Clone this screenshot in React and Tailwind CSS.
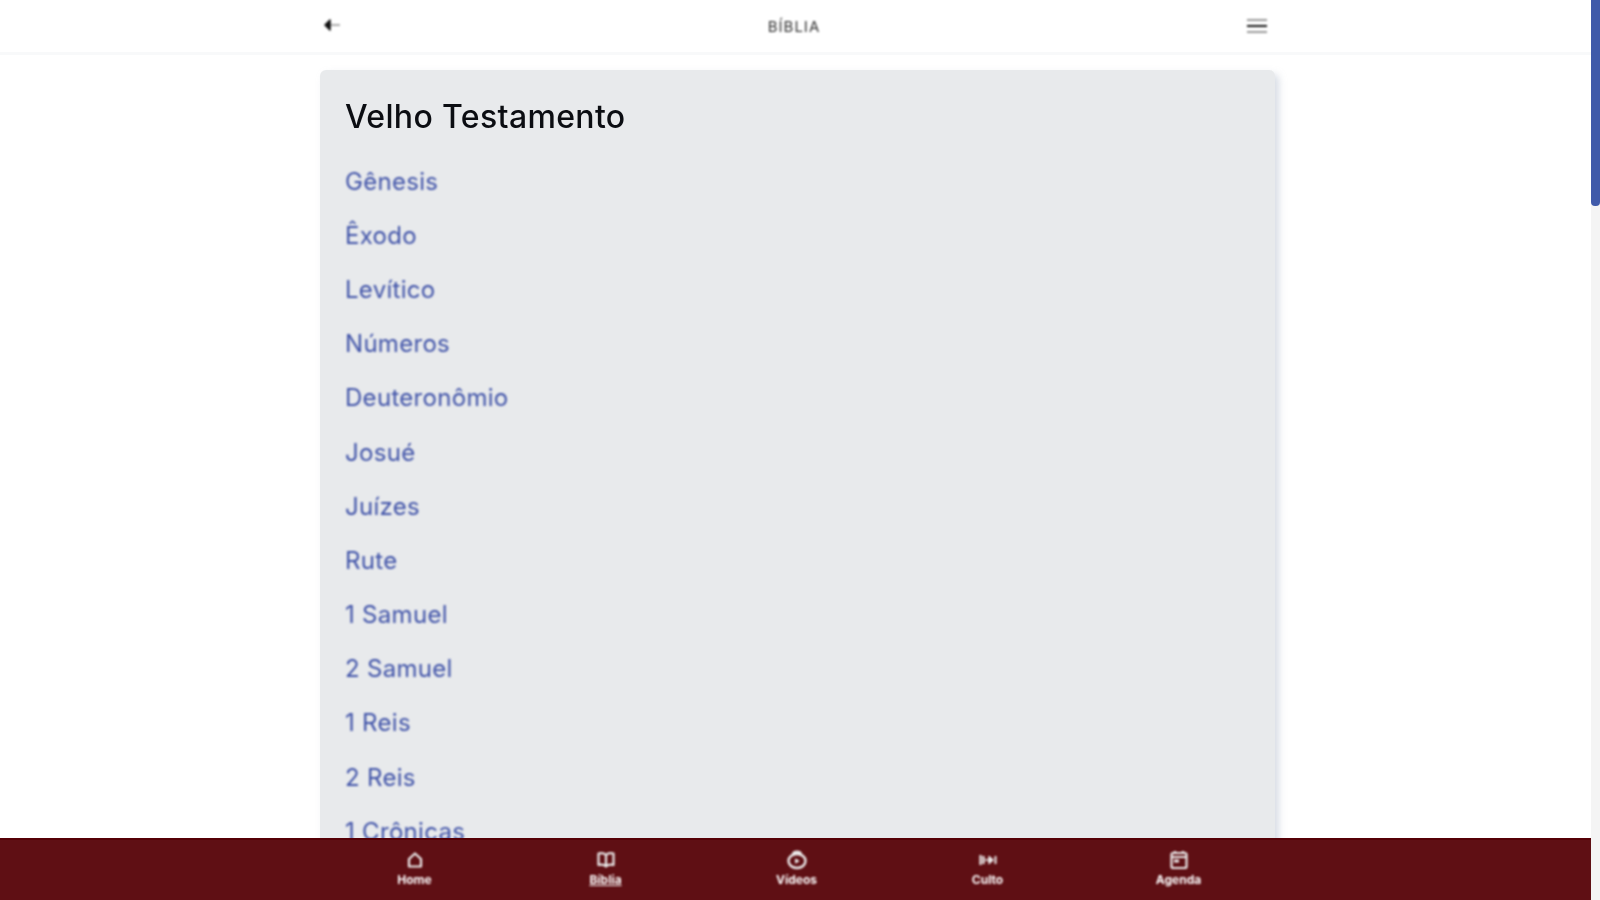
import React from 'react';

const books = [
    'Gênesis', 'Êxodo', 'Levítico', 'Números', 'Deuteronômio', 'Josué', 'Juízes',
    'Rute', '1 Samuel', '2 Samuel', '1 Reis', '2 Reis', '1 Crônicas', '2 Crônicas',
];

const HomeIcon = () => (
    <svg width="18" height="18" viewBox="0 0 18 18" fill="none" stroke="currentColor" strokeWidth="2.2" strokeLinejoin="round">
        <path d="M3 8 L9 2.5 L15 8 V15.5 H3 Z" />
    </svg>
);

const BookIcon = () => (
    <svg width="20" height="18" viewBox="0 0 20 18" fill="none" stroke="currentColor" strokeWidth="2.2" strokeLinejoin="round">
        <path d="M10 4 C8 2 5 2 2.5 2.5 V14 C5 13.5 8 13.5 10 15.5 C12 13.5 15 13.5 17.5 14 V2.5 C15 2 12 2 10 4 Z M10 4 V15.5" />
    </svg>
);

const VideoIcon = () => (
    <svg width="22" height="20" viewBox="0 0 22 20" fill="none" stroke="currentColor" strokeWidth="2.4" strokeLinejoin="round">
        <path d="M7 4 C8 0.8 14 0.8 15 4" />
        <ellipse cx="11" cy="11" rx="8.5" ry="7" />
        <path d="M9.5 9 L13 11 L9.5 13 Z" fill="currentColor" strokeWidth="1" />
    </svg>
);

const CultoIcon = () => (
    <svg width="20" height="18" viewBox="0 0 20 18" fill="currentColor" stroke="currentColor" strokeWidth="1.4" strokeLinejoin="round">
        <path d="M2.5 4 V14 M5.5 5 V13" fill="none" strokeWidth="2.2" />
        <path d="M7 9 H11 M11 5.5 L15 9 L11 12.5 Z" />
        <path d="M17.5 5 V13" fill="none" strokeWidth="2" />
    </svg>
);

const CalendarIcon = () => (
    <svg width="20" height="20" viewBox="0 0 20 20" fill="none" stroke="currentColor" strokeWidth="2.2" strokeLinejoin="round">
        <rect x="2.5" y="3" width="15" height="15" rx="1.5" />
        <path d="M2.5 7 H17.5 M6 1 V3 M14 1 V3" />
        <rect x="5" y="9.5" width="5" height="3" fill="currentColor" stroke="none" />
    </svg>
);

const navItems = [
    { label: 'Home', icon: <HomeIcon /> },
    { label: 'Bíblia', icon: <BookIcon />, active: true },
    { label: 'Vídeos', icon: <VideoIcon /> },
    { label: 'Culto', icon: <CultoIcon /> },
    { label: 'Agenda', icon: <CalendarIcon /> },
];

const App = () => {
    return (
        <div className="h-screen flex overflow-hidden bg-white font-['Inter',sans-serif]">
            <div className="flex-1 min-w-0 flex flex-col">
                <header className="h-[55px] shrink-0 border-b-[3px] border-[#f8f9fa] bg-white">
                    <div className="w-[955px] ml-[320px] h-full flex items-center justify-between pl-[3px] pr-[8px] blur-[0.8px]">
                        <svg width="18" height="16" viewBox="0 0 18 16" fill="none" className="text-[#111] mb-[2px]">
                            <path d="M7 3 L2 8 L7 13 Z" fill="currentColor" stroke="currentColor" strokeWidth="1.5" strokeLinejoin="round" />
                            <path d="M7 8 H17" stroke="currentColor" strokeWidth="2" opacity="0.35" />
                        </svg>
                        <span className="text-[15px] leading-none text-[#333] tracking-[1px]">BÍBLIA</span>
                        <svg width="20" height="16" viewBox="0 0 20 16" fill="none">
                            <path d="M0 2 H20 M0 14 H20" stroke="#777" strokeWidth="1.5" />
                            <path d="M0 8 H20" stroke="#111" strokeWidth="2" />
                        </svg>
                    </div>
                </header>

                <main className="flex-1 min-h-0 overflow-hidden pt-[15px]">
                    <div className="w-[955px] ml-[320px] bg-[#e8eaec] rounded-[6px] shadow-[4px_4px_7px_rgba(180,190,205,0.5)] px-[25px] pt-[23px]">
                        <h2 className="text-[32px] leading-[48px] text-[#0b0d12] font-medium tracking-[0.35px] mb-[13.5px] blur-[0.5px]">Velho Testamento</h2>
                        <ul className="blur-[0.8px]">
                            {books.map((book) => (
                                <li key={book} className="h-[54.2px] flex items-center text-[24px] tracking-[0.3px] text-[#3f52a8]">
                                    {book}
                                </li>
                            ))}
                        </ul>
                    </div>
                </main>

                <footer className="h-[62px] shrink-0 bg-[#5f0f14] border-t-2 border-[#560006] text-white">
                    <div className="w-[955px] ml-[319px] grid grid-cols-5 pt-[10px] blur-[1px]">
                        {navItems.map((item) => (
                            <div key={item.label} className="flex flex-col items-center">
                                <div className="h-[20px] mb-[2px] flex items-center text-[#eee]">{item.icon}</div>
                                <span className={`text-[12px] leading-[16px] font-bold ${item.active ? 'underline' : ''}`}>
                                    {item.label}
                                </span>
                            </div>
                        ))}
                    </div>
                </footer>
            </div>

            <div className="w-[9px] shrink-0 bg-[#f4f4f4]">
                <div className="h-[206px] bg-[#3f5aa9] rounded-b-[4px]" />
            </div>
        </div>
    );
};

export default App;
